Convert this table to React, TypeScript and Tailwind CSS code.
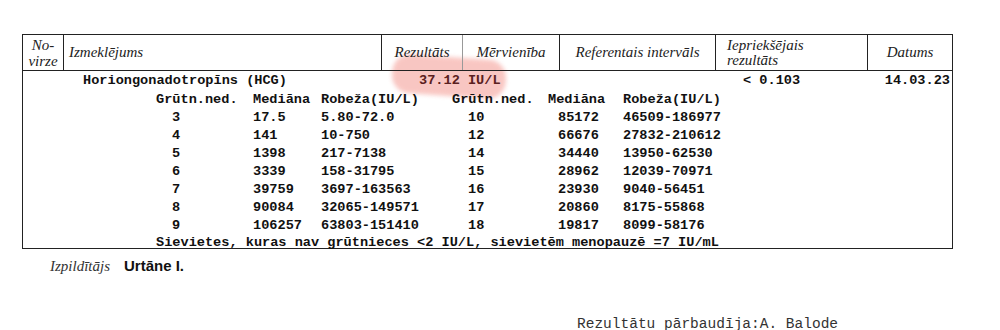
const weeksA = [
  ["3", "17.5", "5.80-72.0"],
  ["4", "141", "10-750"],
  ["5", "1398", "217-7138"],
  ["6", "3339", "158-31795"],
  ["7", "39759", "3697-163563"],
  ["8", "90084", "32065-149571"],
  ["9", "106257", "63803-151410"],
]

const weeksB = [
  ["10", "85172", "46509-186977"],
  ["12", "66676", "27832-210612"],
  ["14", "34440", "13950-62530"],
  ["15", "28962", "12039-70971"],
  ["16", "23930", "9040-56451"],
  ["17", "20860", "8175-55868"],
  ["18", "19817", "8099-58176"],
]

const serif = "font-['Liberation_Serif',serif] italic text-[15px] text-[#222]"
const mono = "font-['Liberation_Mono',monospace] font-bold text-[13.6px] text-[#111]"
const subCols = "grid grid-cols-[97px_68px_131px_96px_75px_1fr] ml-[133px]"

export default function App() {
  return (
    <div className="relative w-[1000px] h-[330px] overflow-hidden bg-white">
      {/* Highlighter mark behind the result (box is transparent, so lines show through) */}
      <div className="pointer-events-none absolute left-[392px] top-[57px] w-[114px] h-[39px] rounded-[18px] rotate-[4deg] bg-[#f5a19a] opacity-60 blur-[2px]" />

      {/* Report box */}
      <div className="relative ml-[22px] mt-[34px] w-[931px] border border-[#222]">
        {/* Column header */}
        <div className={`grid grid-cols-[40px_318px_81px_97px_156px_152px_85px] h-[36px] border-b border-[#222] ${serif}`}>
          <div className="flex flex-col items-center justify-center leading-[16px]">
            <span>No-</span>
            <span>virze</span>
          </div>
          <div className="flex items-center border-l border-[#222] pl-[5px]">Izmeklējums</div>
          <div className="flex items-center justify-center border-l border-[#222]">Rezultāts</div>
          <div className="flex items-center justify-center border-l border-[#999]">Mērvienība</div>
          <div className="flex items-center justify-center border-l border-[#222]">Referentais intervāls</div>
          <div className="flex flex-col justify-center border-l border-[#222] pl-[11px] leading-[15px]">
            <span>Iepriekšējais</span>
            <span>rezultāts</span>
          </div>
          <div className="flex items-center justify-center border-l border-[#222]">Datums</div>
        </div>

        {/* Body */}
        <div className={`${mono} whitespace-pre`}>
          <div className="grid grid-cols-[396px_324px_1fr_auto] h-[20px] items-center leading-[18px]">
            <span className="pl-[60px]">Horiongonadotropīns (HCG)</span>
            <span className="text-[#5a2020]">37.12 IU/L</span>
            <span>&lt; 0.103</span>
            <span className="pr-[2px]">14.03.23</span>
          </div>

          <div className={`${subCols} h-[18px] leading-[18px]`}>
            <span>Grūtn.ned.</span>
            <span>Mediāna</span>
            <span>Robeža(IU/L)</span>
            <span>Grūtn.ned.</span>
            <span>Mediāna</span>
            <span>Robeža(IU/L)</span>
          </div>

          {weeksA.map((a, i) => {
            const b = weeksB[i]
            return (
              <div key={a[0]} className={`${subCols} h-[18px] leading-[18px]`}>
                <span className="pl-[16px]">{a[0]}</span>
                <span>{a[1]}</span>
                <span>{a[2]}</span>
                <span className="pl-[16px]">{b[0]}</span>
                <span className="pl-[10px]">{b[1]}</span>
                <span>{b[2]}</span>
              </div>
            )
          })}

          <div className="h-[13px] leading-[16px] pl-[133px]">
            Sievietes, kuras nav grūtnieces &lt;2 IU/L, sievietēm menopauzē =7 IU/mL
          </div>
        </div>
      </div>

      {/* Performer */}
      <div className="flex items-center gap-[14px] ml-[50px] mt-[8px] h-[18px]">
        <span className="font-['Liberation_Serif',serif] italic text-[15px] text-[#333]">Izpildītājs</span>
        <span className="font-['Liberation_Sans',sans-serif] font-bold text-[15px] text-[#111]">Urtāne I.</span>
      </div>

      {/* Verified by */}
      <div className="ml-[577px] mt-[41px] font-['Liberation_Mono',monospace] text-[14.5px] leading-[16px] text-[#333] whitespace-pre">
        Rezultātu pārbaudīja:A. Balode
      </div>
    </div>
  )
}
